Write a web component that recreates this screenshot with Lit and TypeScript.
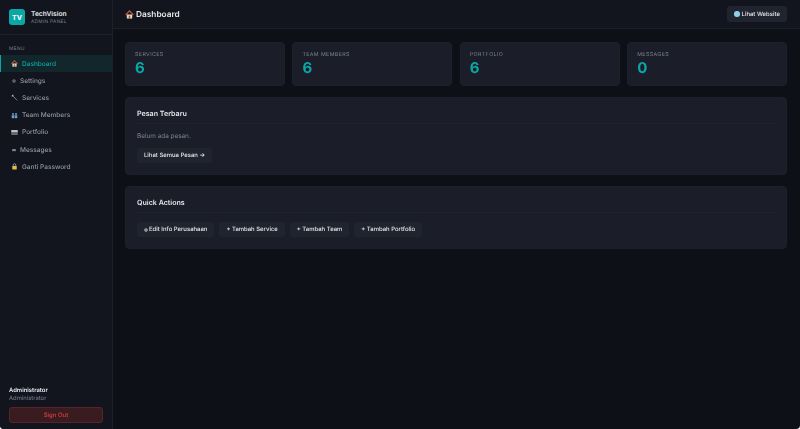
import { LitElement, html, css, svg } from 'lit';
import { customElement } from 'lit/decorators.js';

const house = svg`<path d="M.8 6.6 6 1.2l5.2 5.4" fill="none" stroke="#b5533c" stroke-width="1.8"/><rect x="2.4" y="6" width="7.2" height="5.4" fill="#e8d8c0"/><rect x="5" y="7.6" width="2" height="3.8" fill="#8a5a3c"/>`;
const wrench = svg`<path d="M3 3 10.5 11" stroke="#9aa0a8" stroke-width="1.3" fill="none"/><path d="M.8 3.4 3.4.8l1.2 1.4L2.2 4.6z" fill="#c4c8cc"/>`;
const people = svg`<g fill="#6f9fc8"><circle cx="3.4" cy="3.4" r="1.7"/><circle cx="8.6" cy="3.4" r="1.7"/><rect x="1.2" y="5.6" width="4.4" height="5"/><rect x="6.4" y="5.6" width="4.4" height="5"/></g>`;
const card = svg`<rect x=".6" y="2.2" width="10.8" height="7.8" fill="#7a7f86"/><rect x=".6" y="2.2" width="10.8" height="2.4" fill="#e4e4e0"/><rect x="2.2" y="6.2" width="7.6" height="1.6" fill="#4a4e55"/>`;
const lock = svg`<path d="M3.8 5.5V3.4a2.2 2.2 0 0 1 4.4 0v2.1" fill="none" stroke="#c8ccd0" stroke-width="1.1"/><rect x="2.2" y="5.2" width="7.6" height="6" rx=".6" fill="#e0bd4a"/>`;
const gear = svg`<circle cx="6" cy="6" r="3.6" fill="none" stroke="currentColor" stroke-width="2.4"/><circle cx="6" cy="6" r="5.4" fill="none" stroke="currentColor" stroke-width="1" stroke-dasharray="1.4 1.4"/>`;
const mail = svg`<rect x=".8" y="3" width="10.4" height="6.4" fill="currentColor"/><path d="M.8 3.4 6 7l5.2-3.6" fill="none" stroke="#12151d" stroke-width=".9"/>`;

const icon = (body: unknown) => html`<svg class="icon" viewBox="0 0 12 12">${body}</svg>`;
const mark = (body: unknown) => html`<svg class="mark" viewBox="0 0 12 12">${body}</svg>`;

const nav = [
  { label: 'Dashboard', glyph: icon(house), active: true },
  { label: 'Settings', glyph: mark(gear) },
  { label: 'Services', glyph: icon(wrench) },
  { label: 'Team Members', glyph: icon(people) },
  { label: 'Portfolio', glyph: icon(card) },
  { label: 'Messages', glyph: mark(mail) },
  { label: 'Ganti Password', glyph: icon(lock) },
];

const stats = [
  { label: 'SERVICES', value: 6 },
  { label: 'TEAM MEMBERS', value: 6 },
  { label: 'PORTFOLIO', value: 6 },
  { label: 'MESSAGES', value: 0 },
];

const actions = ['+ Tambah Service', '+ Tambah Team', '+ Tambah Portfolio'];

@customElement('app-root')
export class AppRoot extends LitElement {
  static styles = css`
    :host {
      display: block;
      height: 429px;
      font-family: Inter, 'Noto Sans', sans-serif;
      color: #e6e8ec;
      text-rendering: geometricPrecision;
    }

    .shell {
      display: flex;
      height: 100%;
      overflow: hidden;
      background: #0d1017;
      border-radius: 0 0 4px 4px;
      filter: blur(0.2px);
    }

    .sidebar {
      width: 112px;
      flex: none;
      display: flex;
      flex-direction: column;
      background: #12151d;
      border-right: 1px solid #1c2029;
    }

    .brand {
      height: 34px;
      flex: none;
      display: flex;
      align-items: center;
      gap: 6px;
      padding: 0 9px;
      border-bottom: 1px solid #1c2029;
    }

    .logo {
      width: 16px;
      height: 16px;
      border-radius: 3px;
      background: #0ba6a6;
      color: #fff;
      font-size: 7px;
      font-weight: 700;
      display: flex;
      align-items: center;
      justify-content: center;
    }

    .brand-name {
      font-size: 6.7px;
      font-weight: 600;
      line-height: 9px;
    }

    .brand-sub {
      font-size: 4.7px;
      letter-spacing: 0.35px;
      color: #7b8291;
      line-height: 6px;
    }

    .menu-title {
      font-size: 4.7px;
      letter-spacing: 0.5px;
      line-height: 6px;
      color: #7b8291;
      padding: 11px 9px 3px;
    }

    .item {
      height: 17.2px;
      flex: none;
      display: flex;
      align-items: center;
      gap: 4px;
      padding-left: 10px;
      font-size: 6.5px;
      font-weight: 500;
      color: #9097a5;
      border-left: 1px solid transparent;
      box-sizing: border-box;
    }

    .item.active {
      background: #12272c;
      color: #0ba6a6;
      border-left-color: #0ba6a6;
    }

    .icon {
      width: 7px;
      height: 7px;
      flex: none;
    }

    .mark {
      width: 4px;
      height: 4px;
      margin: 0 0.5px;
      flex: none;
    }

    .user {
      margin-top: auto;
      padding: 0 9px 6px;
    }

    .user-name {
      font-size: 5.9px;
      font-weight: 600;
      line-height: 8px;
    }

    .user-role {
      font-size: 5.9px;
      color: #7b8291;
      line-height: 8px;
    }

    .signout {
      margin-top: 4px;
      height: 16px;
      border-radius: 3px;
      background: #3a1c20;
      border: 1px solid #55252a;
      color: #d8403f;
      font-size: 6px;
      font-weight: 500;
      display: flex;
      align-items: center;
      justify-content: center;
      box-sizing: border-box;
    }

    .main {
      flex: 1;
      min-width: 0;
      display: flex;
      flex-direction: column;
    }

    .topbar {
      height: 28px;
      flex: none;
      display: flex;
      align-items: center;
      justify-content: space-between;
      padding: 0 13px 0 12px;
      background: #12151d;
      border-bottom: 1px solid #1c2029;
    }

    .title {
      display: flex;
      align-items: center;
      gap: 2px;
      font-size: 8.3px;
      font-weight: 600;
      padding-top: 1px;
    }

    .title .icon {
      width: 9px;
      height: 9px;
    }

    .btn {
      display: flex;
      width: fit-content;
      align-items: center;
      justify-content: center;
      gap: 2px;
      height: 15px;
      padding: 0 7px;
      border-radius: 3px;
      background: #20242e;
      font-size: 5.95px;
      font-weight: 500;
      color: #e6e8ec;
      white-space: nowrap;
    }

    .btn .mark {
      margin: 0 -1px 0 0;
    }

    .topbar .btn {
      height: 16px;
      width: 60px;
      padding: 0;
      box-sizing: border-box;
    }

    .dot {
      width: 5.5px;
      height: 5.5px;
      border-radius: 50%;
      background: #8fd0e8;
    }

    .content {
      padding: 13px 13px 0 12px;
      display: flex;
      flex-direction: column;
      gap: 11px;
    }

    .stats {
      display: grid;
      grid-template-columns: repeat(4, 1fr);
      gap: 7.5px;
    }

    .stat,
    .panel {
      background: #1b1e28;
      border: 1px solid #1d2029;
      border-radius: 4px;
      box-sizing: border-box;
    }

    .stat {
      height: 44px;
      padding: 9px 9px 0;
    }

    .stat-label {
      font-size: 5.3px;
      letter-spacing: 0.4px;
      color: #7b8291;
      line-height: 7px;
    }

    .stat-value {
      font-size: 15px;
      font-weight: 700;
      color: #0ba6a6;
      line-height: 17px;
    }

    .panel {
      padding: 0 11px;
    }

    .panel-title {
      font-size: 7.1px;
      font-weight: 600;
      height: 26px;
      box-sizing: border-box;
      display: flex;
      align-items: flex-end;
      padding-bottom: 5px;
      border-bottom: 1px solid #20242e;
    }

    .recent {
      height: 78px;
    }

    .quick {
      height: 63px;
    }

    .empty {
      font-size: 6.4px;
      color: #7b8291;
      margin: 8px 0 7px;
      line-height: 9px;
    }

    .actions {
      display: flex;
      gap: 5px;
      margin-top: 9px;
    }
  `;

  render() {
    return html`
      <div class="shell">
        <aside class="sidebar">
          <div class="brand">
            <div class="logo">TV</div>
            <div>
              <div class="brand-name">TechVision</div>
              <div class="brand-sub">ADMIN PANEL</div>
            </div>
          </div>
          <div class="menu-title">MENU</div>
          ${nav.map(
            (n) => html`<div class="item ${n.active ? 'active' : ''}">${n.glyph}<span>${n.label}</span></div>`
          )}
          <div class="user">
            <div class="user-name">Administrator</div>
            <div class="user-role">Administrator</div>
            <div class="signout">Sign Out</div>
          </div>
        </aside>
        <div class="main">
          <header class="topbar">
            <div class="title">${icon(house)}<span>Dashboard</span></div>
            <div class="btn"><span class="dot"></span>Lihat Website</div>
          </header>
          <div class="content">
            <div class="stats">
              ${stats.map(
                (s) => html`<div class="stat">
                  <div class="stat-label">${s.label}</div>
                  <div class="stat-value">${s.value}</div>
                </div>`
              )}
            </div>
            <section class="panel recent">
              <div class="panel-title">Pesan Terbaru</div>
              <div class="empty">Belum ada pesan.</div>
              <div class="btn">Lihat Semua Pesan →</div>
            </section>
            <section class="panel quick">
              <div class="panel-title">Quick Actions</div>
              <div class="actions">
                <div class="btn">${mark(gear)}Edit Info Perusahaan</div>
                ${actions.map((a) => html`<div class="btn">${a}</div>`)}
              </div>
            </section>
          </div>
        </div>
      </div>
    `;
  }
}
